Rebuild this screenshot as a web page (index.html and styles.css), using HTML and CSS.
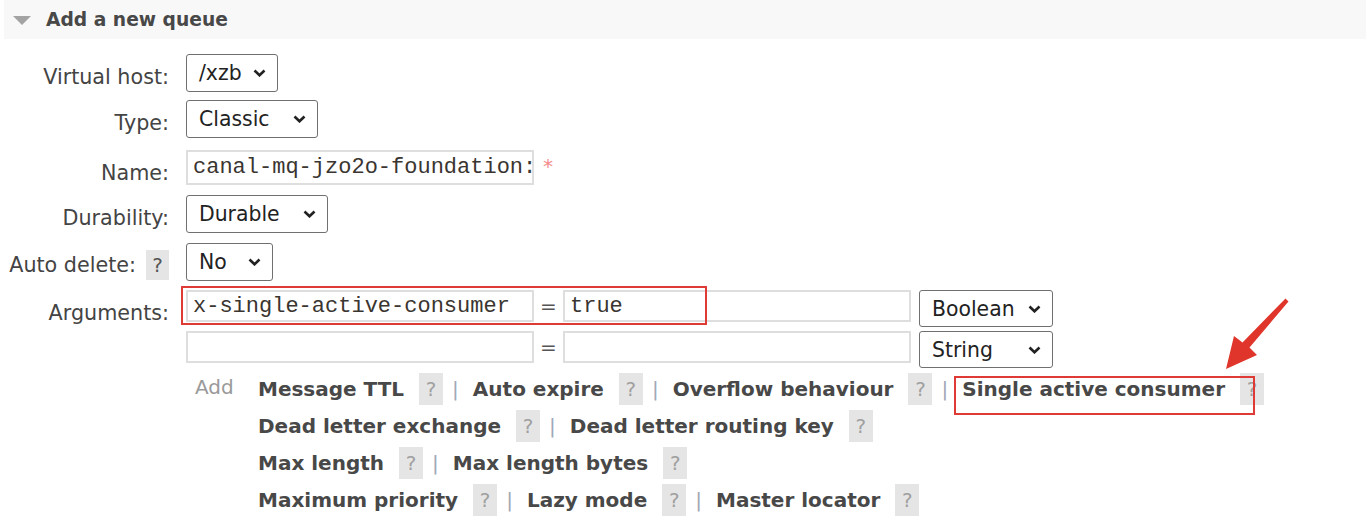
FILE: index.html
```html
<!DOCTYPE html>
<html lang="en">
<head>
<meta charset="utf-8">
<title>Add a new queue</title>
<link rel="stylesheet" href="styles.css">
</head>
<body>
<div class="page">
  <div class="section-head">
    <svg class="toggle" width="18" height="10" viewBox="0 0 18 10"><polygon points="0,0 18,0 9,9" fill="#a3a3a3"/></svg>
    <h2 class="title">Add a new queue</h2>
  </div>

  <div class="form">
    <div class="label">Virtual host:</div>
    <div class="field">
      <div class="select w-vhost"><span>/xzb</span><svg class="chev" width="13" height="8" viewBox="0 0 13 8"><polyline points="1.5,1.5 6.5,6.3 11.5,1.5" fill="none" stroke="#222" stroke-width="2.6"/></svg></div>
    </div>

    <div class="label">Type:</div>
    <div class="field">
      <div class="select w-type"><span>Classic</span><svg class="chev" width="13" height="8" viewBox="0 0 13 8"><polyline points="1.5,1.5 6.5,6.3 11.5,1.5" fill="none" stroke="#222" stroke-width="2.6"/></svg></div>
    </div>

    <div class="label">Name:</div>
    <div class="field name-field">
      <input class="text-in name-in" type="text" value="canal-mq-jzo2o-foundation:queue">
      <span class="mand">*</span>
    </div>

    <div class="label">Durability:</div>
    <div class="field">
      <div class="select w-dur"><span>Durable</span><svg class="chev" width="13" height="8" viewBox="0 0 13 8"><polyline points="1.5,1.5 6.5,6.3 11.5,1.5" fill="none" stroke="#222" stroke-width="2.6"/></svg></div>
    </div>

    <div class="label label-help"><span>Auto delete:</span><span class="help dark">?</span></div>
    <div class="field">
      <div class="select w-auto"><span>No</span><svg class="chev" width="13" height="8" viewBox="0 0 13 8"><polyline points="1.5,1.5 6.5,6.3 11.5,1.5" fill="none" stroke="#222" stroke-width="2.6"/></svg></div>
    </div>

    <div class="label">Arguments:</div>
    <div class="field args">
      <div class="arg-row">
        <input class="text-in arg-in" type="text" value="x-single-active-consumer">
        <span class="eq">=</span>
        <input class="text-in arg-in" type="text" value="true">
        <div class="select w-argtype"><span>Boolean</span><svg class="chev" width="13" height="8" viewBox="0 0 13 8"><polyline points="1.5,1.5 6.5,6.3 11.5,1.5" fill="none" stroke="#222" stroke-width="2.6"/></svg></div>
      </div>
      <div class="arg-row">
        <input class="text-in arg-in" type="text" value="">
        <span class="eq">=</span>
        <input class="text-in arg-in" type="text" value="">
        <div class="select w-argtype"><span>String</span><svg class="chev" width="13" height="8" viewBox="0 0 13 8"><polyline points="1.5,1.5 6.5,6.3 11.5,1.5" fill="none" stroke="#222" stroke-width="2.6"/></svg></div>
      </div>
      <div class="add-row">
        <span class="add">Add</span>
        <div class="links">
          <div class="lrow">
            <span class="lk">Message TTL</span><span class="help">?</span><span class="sep">|</span>
            <span class="lk">Auto expire</span><span class="help">?</span><span class="sep">|</span>
            <span class="lk">Overflow behaviour</span><span class="help">?</span><span class="sep">|</span>
            <span class="lk">Single active consumer</span><span class="help">?</span>
          </div>
          <div class="lrow">
            <span class="lk">Dead letter exchange</span><span class="help">?</span><span class="sep">|</span>
            <span class="lk">Dead letter routing key</span><span class="help">?</span>
          </div>
          <div class="lrow">
            <span class="lk">Max length</span><span class="help">?</span><span class="sep">|</span>
            <span class="lk">Max length bytes</span><span class="help">?</span>
          </div>
          <div class="lrow">
            <span class="lk">Maximum priority</span><span class="help">?</span><span class="sep">|</span>
            <span class="lk">Lazy mode</span><span class="help">?</span><span class="sep">|</span>
            <span class="lk">Master locator</span><span class="help">?</span>
          </div>
        </div>
      </div>
    </div>
  </div>

  <div class="mark mark-arg"></div>
  <div class="mark mark-sac"></div>
  <svg class="arrow" width="1366" height="519" viewBox="0 0 1366 519">
    <polygon points="1288.5,301.5 1249.5,347.5 1257,355 1226,369 1234,336 1242.5,342.5 1285.5,298.5" fill="#e0352b"/>
  </svg>
</div>
</body>
</html>
```

FILE: styles.css
```css
html, body {
  margin: 0;
  padding: 0;
  background: #fff;
}

body {
  font-family: "DejaVu Sans", Verdana, sans-serif;
  color: #444;
  font-size: 20px;
}

.page {
  position: relative;
  width: 1366px;
  height: 519px;
  overflow: hidden;
}

.section-head {
  margin-left: 4px;
  height: 39px;
  background: #f8f8f8;
  display: flex;
  align-items: center;
}

.toggle {
  margin-left: 9px;
  margin-top: 2px;
}

.title {
  margin: 0 0 0 15px;
  font-size: 18.7px;
  font-weight: bold;
  color: #484848;
  line-height: 24px;
}

.form {
  padding-top: 15px;
  display: grid;
  grid-template-columns: 169px 1000px;
  grid-template-rows: 46px 50px 45px 48px 47px auto;
  column-gap: 17px;
}

.label {
  text-align: right;
  padding-top: 11px;
  line-height: 24px;
  font-size: 20.7px;
  color: #444;
  white-space: nowrap;
}

.label-help {
  display: flex;
  justify-content: flex-end;
  align-items: center;
  gap: 10px;
  padding-top: 7px;
  height: 30px;
}

.field {
  display: flex;
  align-items: flex-start;
}

.select {
  box-sizing: border-box;
  height: 38px;
  border: 1px solid #707070;
  border-radius: 3px;
  background: #fff;
  display: flex;
  align-items: center;
  justify-content: space-between;
  padding: 0 11px 0 12px;
  color: #222;
  font-size: 20.4px;
  white-space: nowrap;
}

.w-vhost { width: 92px; }
.w-type { width: 132px; }
.w-dur { width: 142px; }
.w-auto { width: 87px; }
.w-argtype { width: 134px; height: 37px; margin-left: 8px; }

.text-in {
  box-sizing: border-box;
  margin: 0;
  width: 348px;
  border: 2px solid #dedede;
  background: #fff;
  font-family: "Liberation Mono", "Courier New", monospace;
  font-size: 22px;
  color: #3a3530;
  padding: 0 0 0 5px;
  outline: none;
}

.name-in { height: 35px; }
.arg-in { height: 32px; }

.mand {
  color: #f48a8a;
  margin-left: 9px;
  margin-top: 4px;
  font-size: 20px;
  line-height: 24px;
}

.args {
  flex-direction: column;
}

.arg-row {
  display: flex;
  align-items: flex-start;
  height: 37px;
  margin-bottom: 4px;
}

.eq {
  width: 29px;
  text-align: center;
  color: #555;
  line-height: 32px;
}

.add-row {
  display: flex;
  align-items: flex-start;
  margin-top: -2px;
}

.add {
  width: 63px;
  padding-left: 9px;
  padding-top: 5px;
  line-height: 24px;
  color: #9a9a9a;
}

.links {
  display: flex;
  flex-direction: column;
}

.lrow {
  display: flex;
  align-items: center;
  height: 37px;
  white-space: nowrap;
}

.lk {
  font-weight: bold;
  color: #484848;
}

.help {
  display: inline-flex;
  align-items: center;
  justify-content: center;
  width: 24px;
  height: 32px;
  margin-left: 15px;
  background: #e5e5e5;
  color: #a0a0a0;
  font-size: 20px;
}

.label-help .help {
  margin-left: 0;
  width: 23px;
  height: 30px;
}

.help.dark {
  color: #555;
}

.sep {
  margin: 0 14px 0 9px;
  color: #a0a8b4;
}

.mark {
  position: absolute;
  box-sizing: border-box;
  border: 2px solid #e03a36;
}

.mark-arg {
  left: 181px;
  top: 286px;
  width: 526px;
  height: 39px;
}

.mark-sac {
  left: 954px;
  top: 376px;
  width: 301px;
  height: 39px;
}

.arrow {
  position: absolute;
  left: 0;
  top: 0;
  pointer-events: none;
}
```
